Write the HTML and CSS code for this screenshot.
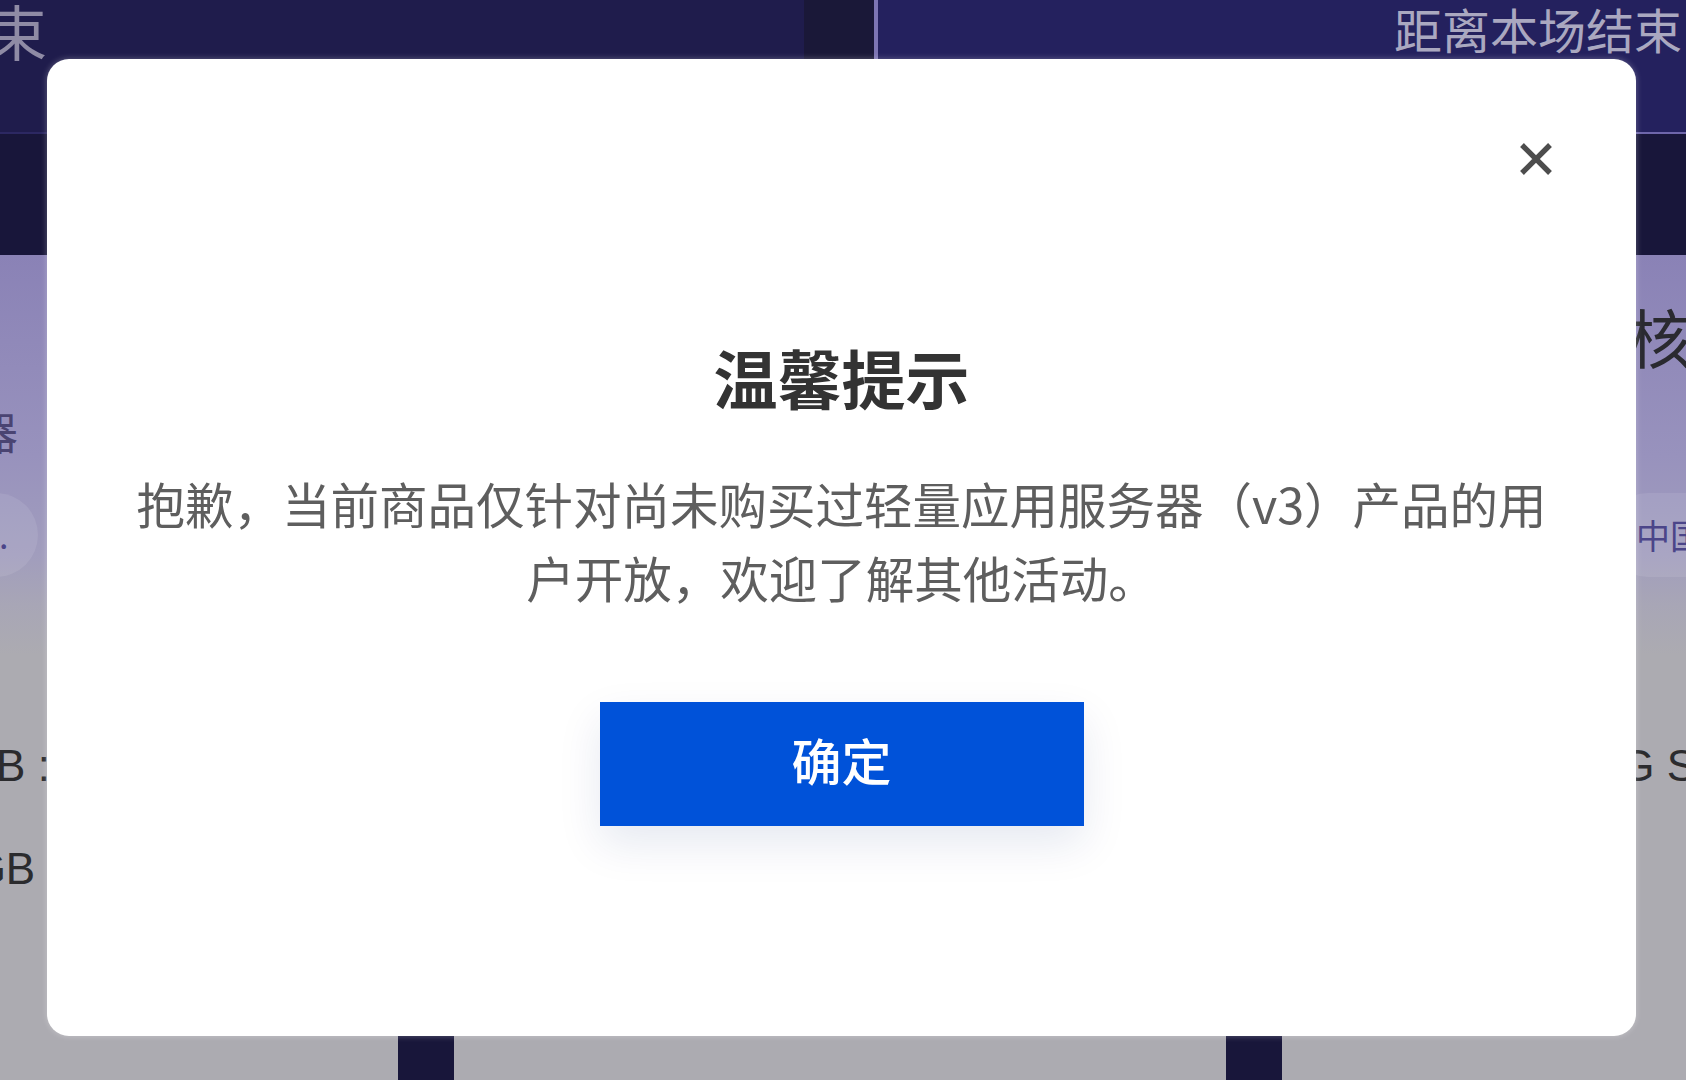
FILE: index.html
```html
<!DOCTYPE html>
<html lang="zh-CN">
<head>
    <meta charset="UTF-8">
    <meta name="viewport" content="width=device-width, initial-scale=1.0">
    <title>温馨提示</title>
    <link rel="stylesheet" href="styles.css">
</head>
<body>
    <div class="page">
        <div class="sessions">
            <div class="session session-past"><span>已结束</span></div>
            <div class="session session-next"><span>距离本场结束</span></div>
        </div>

        <div class="cards">
            <div class="card">
                <h3 class="card-title">入门型</h3>
                <p class="card-sub">高性能应用服务器</p>
                <div class="regions">
                    <span class="region">中国香港</span>
                    <span class="region">更多...</span>
                </div>
                <div class="specs">
                    <p class="spec">SSD 云硬盘 80GB : 系统盘</p>
                    <p class="spec">每月流量包 500GB</p>
                </div>
            </div>
            <div class="card">
                <h3 class="card-title">通用型</h3>
                <p class="card-sub">轻量应用服务器</p>
                <div class="regions">
                    <span class="region">华南地区广州</span>
                    <span class="region">中国香港</span>
                </div>
                <div class="specs">
                    <p class="spec">2核CPU 内存 4G SSD</p>
                    <p class="spec">每月流量包 800GB</p>
                </div>
            </div>
            <div class="card">
                <h3 class="card-title">特惠套餐 2核4G</h3>
                <p class="card-sub">轻量应用服务器</p>
                <div class="regions">
                    <span class="region">华南地区广州</span>
                    <span class="region">中国香港</span>
                </div>
                <div class="specs">
                    <p class="spec">4核CPU 内存 8G SSD</p>
                    <p class="spec">月流量 1200GB</p>
                </div>
            </div>
        </div>
    </div>

    <!-- 弹窗 -->
    <div class="mask">
        <div class="dialog">
            <button class="dialog-close" type="button" aria-label="关闭">
                <svg width="34" height="34" viewBox="0 0 34 34">
                    <path d="M3 3 L31 31 M31 3 L3 31" stroke="#4d4d4d" stroke-width="5.4" fill="none"/>
                </svg>
            </button>
            <h2 class="dialog-title">温馨提示</h2>
            <p class="dialog-text">抱歉，当前商品仅针对尚未购买过轻量应用服务器（v3）产品的用户开放，欢迎了解其他活动。</p>
            <button class="dialog-btn" type="button">确定</button>
        </div>
    </div>
</body>
</html>
```

FILE: styles.css
```css
* {
    box-sizing: border-box;
}
body {
    margin: 0;
    height: 1080px;
    overflow: hidden;
    background: #18163a;
    font-family: "Noto Sans CJK SC", "Noto Sans", sans-serif;
}

/* --- 场次栏 --- */
.sessions {
    display: flex;
    height: 134px;
    background: #1a1838;
    white-space: nowrap;
}
.session {
    display: flex;
    align-items: flex-start;
    overflow: hidden;
}
.session-past {
    width: 804px;
    justify-content: flex-end;
    padding-right: 757px;
    background: #1f1c4c;
    border-bottom: 2px solid #2c2862;
    color: #8f8ba5;
    font-size: 60px;
    line-height: 60px;
}
.session-next {
    flex: 1;
    margin-left: 70px;
    padding-left: 516px;
    background: #24215e;
    border-left: 4px solid #7d75b3;
    border-bottom: 2px solid #6e66aa;
    color: #aaa8c0;
    font-size: 48px;
    line-height: 56px;
}

/* --- 商品卡片 --- */
.cards {
    display: flex;
    gap: 56px;
    margin-top: 121px;
    margin-left: -374px;
}
.card {
    flex: 0 0 772px;
    height: 900px;
    padding: 40px 40px 0;
    white-space: nowrap;
    background: linear-gradient(180deg, #8a82b6 0, #9892bd 200px, #a19dbd 300px, #a8a6b6 350px, #acabb1 400px);
}
.card-title {
    margin: 0;
    font-size: 64px;
    line-height: 80px;
    font-weight: 400;
    color: #2a2a30;
}
.card-sub {
    margin: 28px 0 0;
    font-size: 44px;
    line-height: 56px;
    color: #4a4472;
}
.regions {
    display: flex;
    gap: 20px;
    margin-top: 34px;
}
.region {
    height: 84px;
    padding: 0 30px;
    border-radius: 42px;
    background: rgba(255, 255, 255, 0.09);
    font-size: 34px;
    line-height: 84px;
    color: #4b4589;
}
.specs {
    margin-top: 163px;
}
.spec {
    margin: 0;
    font-family: "Liberation Sans", "Noto Sans CJK SC", sans-serif;
    font-size: 44px;
    line-height: 52px;
    color: #2b2b2e;
}
.spec + .spec {
    margin-top: 51px;
}

/* --- 弹窗 --- */
.mask {
    position: fixed;
    top: 0;
    left: 0;
    width: 100%;
    height: 100%;
    display: flex;
    justify-content: center;
    align-items: center;
    padding: 58px 50px 44px 47px;
}
.dialog {
    position: relative;
    width: 1589px;
    height: 977px;
    padding-top: 277px;
    background: #fff;
    border-radius: 22px;
    text-align: center;
    box-shadow: 0 0 6px rgba(255, 255, 255, 0.3);
}
.dialog-close {
    position: absolute;
    top: 83px;
    right: 83px;
    width: 34px;
    height: 34px;
    padding: 0;
    border: none;
    background: none;
    cursor: pointer;
}
.dialog-close svg {
    display: block;
}
.dialog-title {
    margin: 0;
    font-size: 64px;
    line-height: 80px;
    font-weight: 700;
    color: #333;
}
.dialog-text {
    max-width: 1440px;
    margin: 50px auto 0;
    font-size: 48.5px;
    line-height: 74px;
    color: #5e5e5e;
}
.dialog-btn {
    display: block;
    width: 484px;
    height: 124px;
    margin: 88px auto 0;
    padding: 0 0 10px;
    border: none;
    border-radius: 0;
    background: #0052d9;
    color: #fff;
    font-family: inherit;
    font-size: 50px;
    font-weight: 500;
    box-shadow: 0 18px 44px rgba(0, 40, 120, 0.1);
    cursor: pointer;
}
```
